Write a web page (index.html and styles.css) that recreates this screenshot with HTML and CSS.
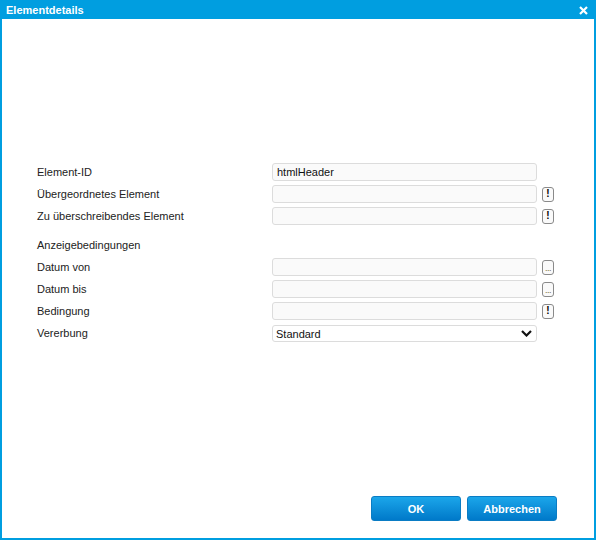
FILE: index.html
```html
<!DOCTYPE html>
<html lang="de">
<head>
    <meta charset="UTF-8">
    <title>Elementdetails</title>
    <link rel="stylesheet" href="styles.css">
</head>
<body>
    <div class="dialog">
        <div class="titlebar">
            <span class="title">Elementdetails</span>
            <span class="close">
                <svg width="9" height="9" viewBox="0 0 9 9"><path d="M1 1L8 8M8 1L1 8" stroke="#fff" stroke-width="2.2"/></svg>
            </span>
        </div>

        <div class="content">
            <div class="form">
                <label>Element-ID</label>
                <input type="text" class="field" value="htmlHeader">
                <span></span>

                <label>Übergeordnetes Element</label>
                <input type="text" class="field">
                <button class="mini">!</button>

                <label>Zu überschreibendes Element</label>
                <input type="text" class="field">
                <button class="mini">!</button>

                <div class="section">Anzeigebedingungen</div>

                <label>Datum von</label>
                <input type="text" class="field">
                <button class="mini dots">...</button>

                <label>Datum bis</label>
                <input type="text" class="field">
                <button class="mini dots">...</button>

                <label>Bedingung</label>
                <input type="text" class="field">
                <button class="mini">!</button>

                <label>Vererbung</label>
                <div class="select">
                    <span>Standard</span>
                    <svg width="11" height="7" viewBox="0 0 11 7"><path d="M1 1L5.5 5.5L10 1" fill="none" stroke="#111" stroke-width="2.2"/></svg>
                </div>
                <span></span>
            </div>
        </div>

        <div class="footer">
            <button class="btn">OK</button>
            <button class="btn">Abbrechen</button>
        </div>
    </div>
</body>
</html>
```

FILE: styles.css
```css
* {
    margin: 0;
    padding: 0;
    box-sizing: border-box;
}

body {
    font-family: Arial, "Liberation Sans", sans-serif;
    font-size: 11px;
    color: #222;
    background: #fff;
}

.dialog {
    width: 596px;
    height: 540px;
    display: flex;
    flex-direction: column;
    border: 2px solid #009ee0;
    border-top: none;
}

.titlebar {
    height: 19px;
    margin: 0 -2px;
    padding: 0 8px 0 6px;
    background: #009ee0;
    display: flex;
    align-items: center;
    justify-content: space-between;
}

.title {
    color: #fff;
    font-weight: bold;
    font-size: 11px;
}

.close {
    display: flex;
    margin-top: 2px;
}

.content {
    flex: 1;
    padding: 144px 0 0 35px;
}

.form {
    display: grid;
    grid-template-columns: 230px 265px 12px;
    column-gap: 5px;
    row-gap: 4px;
    align-items: center;
}

.form label {
    line-height: 18px;
}

.section {
    grid-column: 1 / 4;
    line-height: 18px;
    margin-top: 7px;
}

.field {
    height: 18px;
    width: 100%;
    border: 1px solid #dcdcdc;
    border-radius: 3px;
    background: #fafafa;
    padding: 0 4px;
    font-family: inherit;
    font-size: 11px;
    color: #111;
    outline: none;
}

.mini {
    width: 12px;
    height: 15px;
    border: 1px solid #8a8a8a;
    border-radius: 3px;
    background: #fafafa;
    font-family: inherit;
    font-size: 10px;
    font-weight: bold;
    color: #000;
    line-height: 12px;
}

.dots {
    font-weight: normal;
    color: #7a6a3a;
    font-size: 9px;
    line-height: 15px;
    letter-spacing: -0.5px;
}

.select {
    height: 17px;
    margin-top: 1px;
    border: 1px solid #dcdcdc;
    border-radius: 3px;
    background: #fff;
    padding: 0 4px 0 3px;
    display: flex;
    align-items: center;
    justify-content: space-between;
    font-size: 11px;
    color: #111;
}

.footer {
    display: flex;
    justify-content: flex-end;
    gap: 6px;
    padding: 0 37px 17px 0;
}

.btn {
    width: 90px;
    height: 25px;
    border: 1px solid #0a7cc4;
    border-radius: 3px;
    background: linear-gradient(#1ba6ea, #0079c9);
    color: #fff;
    font-family: inherit;
    font-size: 11px;
    font-weight: bold;
}
```
